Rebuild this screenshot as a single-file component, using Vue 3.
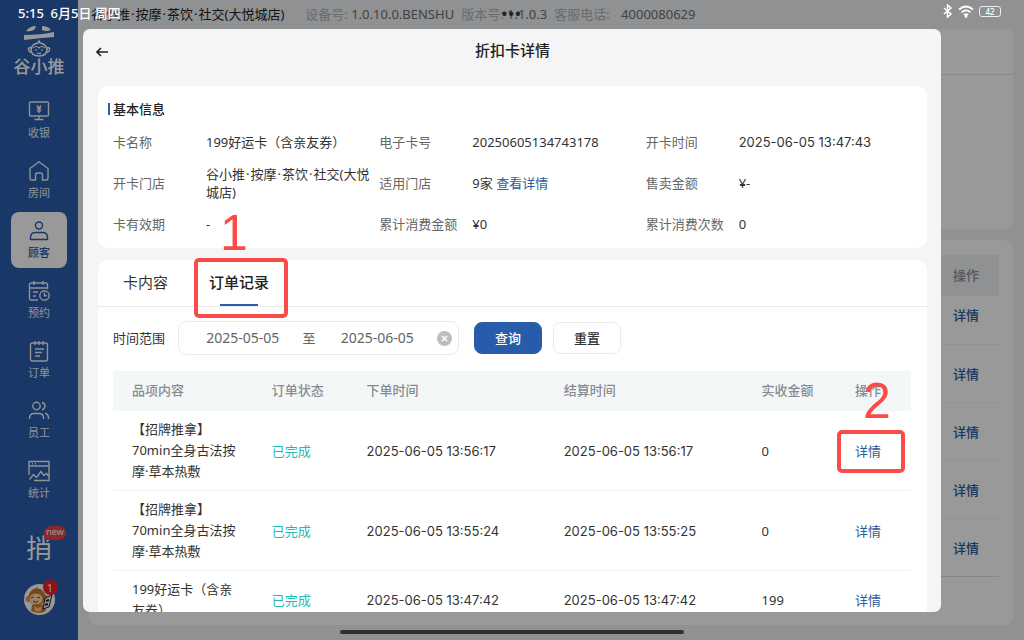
<script setup>
import { ref } from 'vue'

const nav = [
  { id: 'cash', label: '收银' },
  { id: 'room', label: '房间' },
  { id: 'customer', label: '顾客' },
  { id: 'booking', label: '预约' },
  { id: 'order', label: '订单' },
  { id: 'staff', label: '员工' },
  { id: 'stats', label: '统计' }
]
const active = ref('customer')

const store = ['谷小推', '按摩', '茶饮', '社交(大悦城店)']
const massage = '【招牌推拿】70min全身古法按摩·草本热敷'

const info = [
  { label: '卡名称', parts: ['199好运卡（含亲友券）'] },
  { label: '电子卡号', parts: ['20250605134743178'] },
  { label: '开卡时间', parts: ['2025-06-05 13:47:43'], date: true },
  { label: '开卡门店', parts: store },
  { label: '适用门店', parts: ['9家 '], link: '查看详情' },
  { label: '售卖金额', parts: ['¥-'] },
  { label: '卡有效期', parts: ['-'] },
  { label: '累计消费金额', parts: ['¥0'] },
  { label: '累计消费次数', parts: ['0'] }
]

const orders = [
  { item: massage, placed: '2025-06-05 13:56:17', settled: '2025-06-05 13:56:17', paid: '0' },
  { item: massage, placed: '2025-06-05 13:55:24', settled: '2025-06-05 13:55:25', paid: '0' },
  { item: '199好运卡（含亲友券）', placed: '2025-06-05 13:47:42', settled: '2025-06-05 13:47:42', paid: '199' }
]

const from = ref('2025-05-05')
const to = ref('2025-06-05')
function clearRange() {
  from.value = ''
  to.value = ''
}
</script>

<template>
  <div class="app">
    <aside class="sidebar">
      <div class="logo">
        <svg width="34" height="32" viewBox="0 0 34 32">
          <path d="M4 6 Q8 1 14 1 L13 4 Q10 7 4 6Z M20 1 Q26 1 29 5 Q24 7 20 5Z M2 10 Q20 10 32 7 L32 12 L20 13 L2 15Z" fill="#fff" />
          <path d="M9 23 Q5 22 7 26 Q8 28 10 27 M25 23 Q29 22 27 26 Q26 28 24 27" fill="none" stroke="#fff" stroke-width="1.4" />
          <path d="M9 24 Q10 19 16 18 L17 16 L18 18 Q24 19 25 24 Q25 31 17 31 Q9 31 9 24Z" fill="none" stroke="#fff" stroke-width="1.6" />
          <path d="M11 23 Q14 20 17 23 Q20 20 23 23 M13 25h2 M19 25h2 M15 28 Q17 29 19 28" fill="none" stroke="#fff" stroke-width="1.1" />
        </svg>
        <span>谷小推</span>
      </div>
      <nav class="nav">
        <button v-for="n in nav" :key="n.id" type="button" :class="{ on: active === n.id }" @click="active = n.id">
          <svg width="22" height="22" viewBox="0 0 22 22" fill="none" stroke="currentColor" stroke-width="1.4">
            <template v-if="n.id === 'cash'">
              <rect x="1.500" y="2" width="19" height="14" rx="1" />
              <path d="M11 16v3.500M6.500 19.500h9M8.800 5.500 11 8l2.200-2.500M11 8v5M8.800 8.500h4.400M8.800 10.800h4.400" />
            </template>
            <path v-else-if="n.id === 'room'" d="M2 8.500 11 1.800l9 6.700v9.500q0 2-2 2h-3.500v-5q0-2-2-2h-3q-2 0-2 2v5H4q-2 0-2-2Z" />
            <template v-else-if="n.id === 'customer'">
              <circle cx="11" cy="5.500" r="3.500" />
              <path d="M2.500 19.500v-2q0-5 5-5h7q5 0 5 5v2Z" stroke-linejoin="round" />
            </template>
            <template v-else-if="n.id === 'booking'">
              <path d="M10 20H3.500Q1.500 20 1.500 18V5q0-2 2-2h14q2 0 2 2v4M1.500 8h18M6 1v4M15 1v4M5 12h5M5 16h3" />
              <circle cx="16.500" cy="15.500" r="4.700" />
              <path d="M16.500 12.500v3.200h2.500" />
            </template>
            <template v-else-if="n.id === 'order'">
              <rect x="2.500" y="3" width="17" height="18" rx="2" />
              <path d="M7 1v4M11 1v4M15 1v4M7 9h9M7 12.500h7M7 16h5" />
            </template>
            <template v-else-if="n.id === 'staff'">
              <circle cx="8.500" cy="6" r="3.700" />
              <path d="M1.500 19v-1q0-4.500 4.500-4.500h5q4.500 0 4.500 4.500v1M14 2.500q3 .5 3 3.500t-3 3.700M17 13.200q3.500.8 3.500 4.800v1" />
            </template>
            <template v-else>
              <path d="M1 15V1.500h20V20.500H6M1 6h20M4 3.700h1M7 3.700h1M1.500 19.500l4-5 3 3 4.500-6 3 4 2.500-2 2 2.500" />
            </template>
          </svg>
          <span>{{ n.label }}</span>
        </button>
      </nav>
      <div class="extra">
        <span class="mark">捎</span>
        <span class="new">new</span>
      </div>
      <div class="avatar">
        <svg width="31" height="31" viewBox="0 0 31 31">
          <circle cx="15.500" cy="15.500" r="15.500" fill="#fff" />
          <circle cx="4.500" cy="15" r="3" fill="#e39a55" />
          <circle cx="21" cy="14" r="3" fill="#e39a55" />
          <path d="M10 6l3-3 1 3Z" fill="#c7762f" />
          <circle cx="13" cy="13" r="8.500" fill="#c7762f" />
          <ellipse cx="12" cy="15" rx="6.500" ry="5.500" fill="#ffd9a8" />
          <path d="M7 14q2-2 3 0M13 14q2-2 3 0M9 17q3 3 5 0" fill="none" stroke="#6b2d10" />
          <path d="M8 21q7-2 12 0l2 6q-7 4-15 0Z" fill="#cf7a2e" />
          <path d="M10 22q4 3 8 0l-1 5q-3 1-6 0Z" fill="#f6c386" />
          <path d="M21 14l7-3-3 12-6 2Z" fill="#eee" stroke="#222" />
          <path d="M22 17l3-1M21 21l3-1" stroke="#222" stroke-width="2" />
        </svg>
        <span class="count">1</span>
      </div>
    </aside>

    <main class="page">
      <header class="topbar">
        <span class="shop"><template v-for="(p, i) in store" :key="i"><i v-if="i" class="dot">·</i>{{ p }}</template></span>
        <span>设备号: <b>1.0.10.0.BENSHU</b></span>
        <span>版本号: <b>1.1.0.3</b></span>
        <span>客服电话: <b class="tel">4000080629</b></span>
      </header>
      <section class="panel upper"><div class="panel-head"></div></section>
      <section class="panel lower">
        <table class="back">
          <thead><tr><th>操作</th></tr></thead>
          <tbody><tr v-for="n in 5" :key="n"><td><a href="#">详情</a></td></tr></tbody>
        </table>
      </section>
    </main>

    <div class="scrim"></div>

    <div class="status left">5:15&nbsp; 6月5日 周四</div>
    <div class="status right">
      <svg width="10" height="14" viewBox="0 0 10 14" fill="none" stroke="#fff" stroke-width="1.500"><path d="M1 4l7 6-3.500 3V1L8 4 1 10" /></svg>
      <svg width="16" height="13" viewBox="0 0 16 13" fill="none" stroke="#fff" stroke-width="1.700"><path d="M1 4.500q7-6 14 0M3.500 7.300q4.500-4 9 0M6 10q2-1.800 4 0" /><circle cx="8" cy="11.500" r=".6" /></svg>
      <span class="battery">42</span>
    </div>
    <span class="privacy">•••</span>

    <div class="modal" role="dialog" aria-labelledby="title">
      <header class="modal-head">
        <button type="button" class="back-btn" aria-label="返回">
          <svg width="12" height="10" viewBox="0 0 12 10" fill="none" stroke="#222" stroke-width="1.600"><path d="M12 5H1M5 1 1 5l4 4" /></svg>
        </button>
        <h1 id="title">折扣卡详情</h1>
      </header>

      <section class="card basic">
        <h2>基本信息</h2>
        <dl>
          <div v-for="f in info" :key="f.label">
            <dt>{{ f.label }}</dt>
            <dd :class="{ date: f.date }"><template v-for="(p, i) in f.parts" :key="i"><i v-if="i" class="dot">·</i>{{ p }}</template><a v-if="f.link" href="#">{{ f.link }}</a></dd>
          </div>
        </dl>
      </section>

      <section class="card records">
        <div class="tabs" role="tablist">
          <button type="button" role="tab" aria-selected="false">卡内容</button>
          <button type="button" role="tab" aria-selected="true" class="on">
            订单记录
            <span class="ring ring-tab"></span>
          </button>
        </div>
        <span class="step step-one">1</span>
        <form class="filter" @submit.prevent>
          <label for="from">时间范围</label>
          <div class="range">
            <input id="from" v-model="from" type="text" aria-label="开始日期">
            <span>至</span>
            <input id="to" v-model="to" type="text" aria-label="结束日期">
            <button type="button" class="clear" aria-label="清除" @click="clearRange">
              <svg width="15" height="15" viewBox="0 0 15 15"><circle cx="7.500" cy="7.500" r="7.500" fill="#b9bec3" /><path d="M4.800 4.800l5.400 5.400M10.200 4.800l-5.400 5.400" stroke="#fff" stroke-width="1.500" /></svg>
            </button>
          </div>
          <button type="submit" class="btn primary">查询</button>
          <button type="reset" class="btn">重置</button>
        </form>
        <table class="orders">
          <colgroup><col class="c1"><col class="c2"><col class="c3"><col class="c4"><col class="c5"><col class="c6"></colgroup>
          <thead>
            <tr><th>品项内容</th><th>订单状态</th><th>下单时间</th><th>结算时间</th><th>实收金额</th><th><span class="anchor">操作<span class="step step-two">2</span></span></th></tr>
          </thead>
          <tbody>
            <tr v-for="(o, k) in orders" :key="k">
              <td class="item">{{ o.item }}</td>
              <td class="done">已完成</td>
              <td class="date">{{ o.placed }}</td>
              <td class="date">{{ o.settled }}</td>
              <td>{{ o.paid }}</td>
              <td><span class="anchor"><a href="#">详情</a><span v-if="k === 0" class="ring ring-link"></span></span></td>
            </tr>
          </tbody>
        </table>
      </section>
    </div>
    <div class="home-bar"></div>
  </div>
</template>

<style>
body { margin: 0; }
</style>

<style scoped>
* { box-sizing: border-box; }
.app {
  position: relative;
  display: flex;
  height: 100vh;
  overflow: hidden;
  background: #eef2f5;
  color: #333;
  font: 13px/18px "Noto Sans", "Noto Sans CJK SC", sans-serif;
}
button, input { font: inherit; color: inherit; border: 0; padding: 0; margin: 0; background: none; }
button { cursor: pointer; }
a { color: #2b5c9e; text-decoration: none; }
.dot { font-style: normal; padding: 0 1px; }
.date { font-family: Inter, "Noto Sans CJK SC", sans-serif; }

.sidebar { flex: 0 0 78px; display: flex; flex-direction: column; align-items: center; background: #2b5dac; color: #fff; }
.logo { display: flex; flex-direction: column; align-items: center; height: 76px; padding-top: 25px; }
.logo svg { flex: none; }
.logo span { font-size: 17px; line-height: 20px; font-weight: 500; }
.nav { display: flex; flex-direction: column; gap: 4px; margin-top: 16px; }
.nav button { display: flex; flex-direction: column; align-items: center; justify-content: center; gap: 3px; width: 56px; height: 56px; border-radius: 8px; font-size: 11px; line-height: 16px; color: #f0f4fa; }
.nav button.on { background: #fff; color: #2b5dac; font-weight: 500; }
.extra { position: relative; margin-top: 24px; height: 32px; }
.mark { display: block; font-size: 26px; line-height: 32px; color: #fff; }
.new { position: absolute; left: 18px; top: -6px; width: 22px; height: 14px; border-radius: 7px 7px 7px 2px; background: #e8434b; font-size: 9px; line-height: 12px; text-align: center; }
.avatar { position: relative; margin-top: 20px; height: 31px; }
.count { position: absolute; left: 19px; top: -4px; width: 15px; height: 15px; border-radius: 8px; background: #f0202c; font-size: 11px; line-height: 15px; text-align: center; }

.page { flex: 1; display: flex; flex-direction: column; gap: 11px; padding: 0 11px 15px; min-width: 0; }
.topbar { display: flex; gap: 7px; height: 18px; padding: 5px 2px 0; color: #b0b2b5; white-space: nowrap; }
.topbar b { font-weight: 400; color: #6c6e70; }
.topbar .tel { padding-left: 8px; }
.shop { color: #222; margin-right: 14px; }
.panel { background: #fff; border-radius: 8px; }
.upper { flex: 0 0 200px; }
.panel-head { height: 46px; border-bottom: 1px solid #e4e4e4; }
.lower { flex: 1; padding: 15px 14px 0; }
.back { width: 100%; border-collapse: separate; border-spacing: 0; text-align: left; }
.back th, .back td { padding: 0 0 0 850px; font-weight: 500; }
.back th { height: 41px; padding-bottom: 2px; background: #eef2f4; color: #909396; }
.back td { height: 58px; border-bottom: 1px solid #f3f3f3; }
.back tr:first-child td { height: 49px; padding-bottom: 10px; }
.back tr:last-child td { border-bottom-color: #e2e2e2; }

.scrim { position: absolute; inset: 0; background: rgba(0, 0, 0, .4); }
.status { position: absolute; top: 4px; color: #fff; font-weight: 500; }
.left { left: 18px; }
.right { top: 4px; right: 23px; display: flex; align-items: center; gap: 5px; }
.battery { width: 22px; height: 11px; border: 1px solid #eee; border-radius: 3px; font-size: 8px; line-height: 9px; text-align: center; }
.privacy { position: absolute; left: 501px; top: 4px; font-size: 18px; color: #222; }
.home-bar { position: absolute; left: 340px; right: 340px; bottom: 6px; height: 4px; border-radius: 2px; background: #2c2e30; }

.modal { position: absolute; inset: 29px 83px 28px; display: flex; flex-direction: column; gap: 12px; padding: 0 14px 0 15px; overflow: hidden; border-radius: 7px; background: #f5f5f6; }
.modal-head { flex: 0 0 45px; display: flex; align-items: center; }
.back-btn { display: flex; width: 12px; margin-left: -2px; }
h1 { flex: 1; margin: 0; padding: 0 10px 4px 0; text-align: center; font-size: 15px; line-height: 20px; font-weight: 500; color: #222; }
.card { background: #fff; border-radius: 10px; }
.basic { flex: 0 0 162px; padding: 13px 0 0 10px; }
h2 { display: flex; align-items: center; gap: 3px; margin: 0; font-size: 13px; line-height: 20px; font-weight: 500; color: #222; }
h2::before { content: ""; width: 2px; height: 12px; background: #2b5dac; }
dl { display: grid; grid-template-columns: 266fr 266fr 281fr; grid-auto-rows: 41px; margin: 2px 0 0 5px; }
dl div { display: flex; align-items: center; }
dt { flex: 0 0 93px; color: #666; }
dd { margin: 0; padding-right: 4px; }

.records { position: relative; flex: 1 0 auto; }
.tabs { display: flex; height: 47px; padding-left: 10px; border-bottom: 1px solid #e9e9eb; font-size: 15px; }
.tabs button { position: relative; padding: 0 15px 2px; margin-right: 11px; }
.tabs .on { font-weight: 500; color: #222; }
.tabs .on::after { content: ""; position: absolute; left: 26px; right: 26px; bottom: 0; height: 2px; background: #2b5dac; }
.ring { position: absolute; border: 4px solid #fb4b48; border-radius: 5px; pointer-events: none; }
.ring-tab { inset: -2px -4px -12px 0; }
.ring-link { inset: -12px -24px -13px -18px; }
.step { position: absolute; color: #fb4b48; font: 50px/50px "Liberation Sans", sans-serif; }
.step-one { left: 122px; top: -52px; }
.step-two { left: 8px; top: -5px; }
.anchor { position: relative; display: inline-block; }

.filter { display: flex; align-items: center; height: 64px; padding: 0 15px 2px; }
.range { display: flex; align-items: center; width: 281px; height: 34px; margin: 0 15px 0 13px; padding: 0 6px 0 0; border: 1px solid #ebebed; border-radius: 8px; color: #666; }
.range input { flex: 1; min-width: 0; padding: 0; text-align: center; font-size: 14px; outline: 0; }
.clear { display: flex; }
.btn { width: 68px; height: 32px; margin-right: 11px; border: 1px solid #ebebed; border-radius: 8px; font-weight: 500; }
.primary { border-color: #285cab; background: #285cab; color: #fff; }

.orders { width: calc(100% - 31px); margin-left: 15px; table-layout: fixed; border-collapse: separate; border-spacing: 0; text-align: left; }
.c1 { width: 17.5%; } .c2 { width: 11.9%; } .c3 { width: 24.7%; } .c4 { width: 24.8%; } .c5 { width: 11.7%; } .c6 { width: 9.4%; }
.orders th { height: 40px; padding: 0 0 2px 19px; background: #f3f7f8; color: #888c90; font-weight: 500; }
.orders td { padding: 8px 0 8px 19px; border-bottom: 1px solid #f1f1f2; white-space: nowrap; }
.orders .item { padding-right: 12px; line-height: 21px; white-space: normal; }
.orders .done { color: #24b9b5; }
.range input:first-child { padding-right: 0; padding-left: 4px; }
.range input:nth-of-type(2) { padding-left: 2px; }
</style>
